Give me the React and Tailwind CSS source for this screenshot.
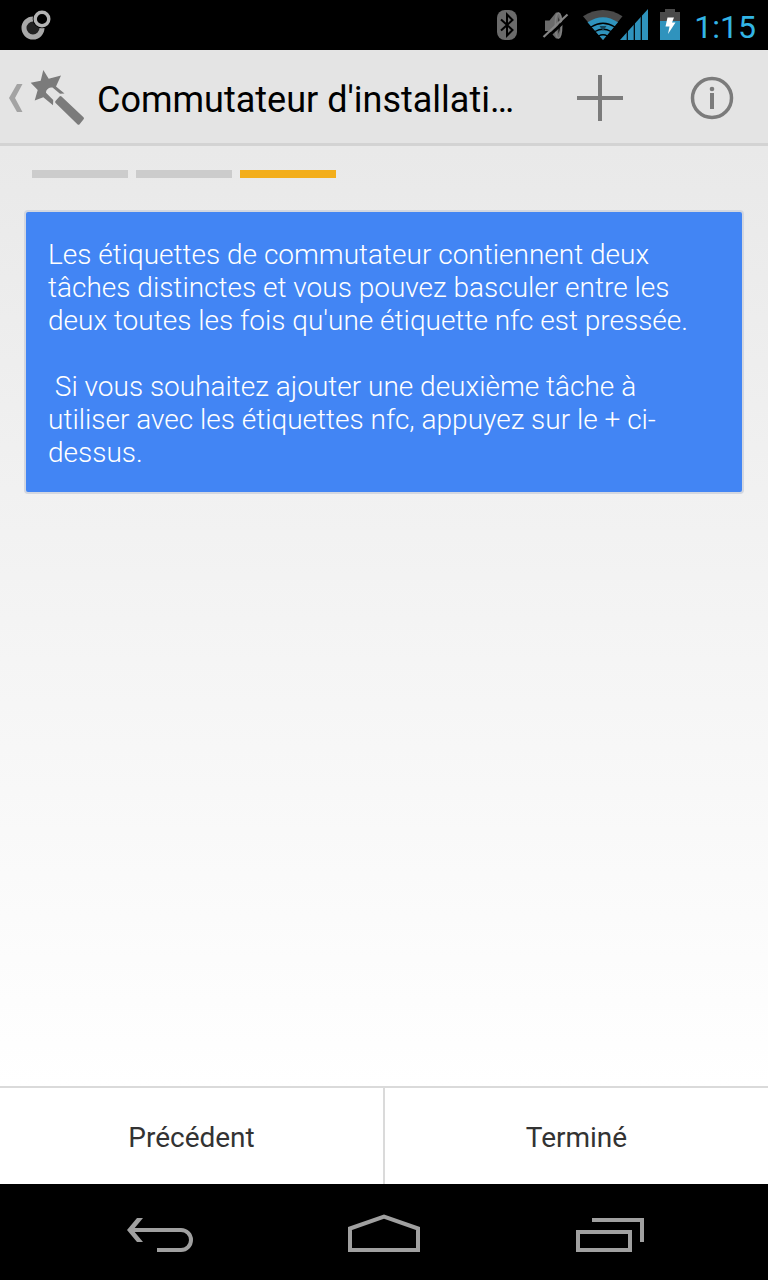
import React from "react";

const STEPS = [
  { id: "type", active: false },
  { id: "first", active: false },
  { id: "second", active: true },
];

const HELP_TEXT =
  "Les étiquettes de commutateur contiennent deux tâches distinctes et vous pouvez basculer entre les deux toutes les fois qu'une étiquette nfc est pressée.\n\n Si vous souhaitez ajouter une deuxième tâche à utiliser avec les étiquettes nfc, appuyez sur le + ci-dessus.";

export default function App() {
  return (
    <div className="flex min-h-screen flex-col bg-black font-[Roboto,sans-serif]">
      <StatusBar />
      <ActionBar title="Commutateur d'installati…" />
      <main className="flex flex-1 flex-col bg-linear-to-b from-[#e9e9e9] to-white px-6 pt-6">
        <StepIndicator />
        <section className="mt-8 rounded-sm border-2 border-[#d3d7e0] bg-[#4285f4] px-[22px] pt-[26px] pb-[23px]">
          <p className="text-[28px] leading-[33px] font-light whitespace-pre-wrap text-white">{HELP_TEXT}</p>
        </section>
      </main>
      <footer className="flex border-t-2 border-[#dadada] bg-white">
        <button type="button" className="h-24 flex-1 border-r-2 border-[#dadada] pt-1 text-[28px] text-[#333333]">
          Précédent
        </button>
        <button type="button" className="h-24 flex-1 pt-1 text-[28px] text-[#333333]">
          Terminé
        </button>
      </footer>
      <NavigationBar />
    </div>
  );
}

function StatusBar() {
  return (
    <div className="flex h-[50px] items-center bg-black pr-3 pl-5">
      <NotificationIcon />
      <div className="ml-auto flex items-center">
        <BluetoothIcon />
        <MutedIcon />
        <WifiIcon />
        <SignalIcon />
        <BatteryIcon />
        <span className="ml-3.5 pt-1 text-[32px] leading-[50px] text-[#33b5e5]">1:15</span>
      </div>
    </div>
  );
}

function ActionBar({ title }) {
  return (
    <header className="flex h-24 items-center border-b-3 border-[#d3d3d3] bg-[#e4e4e4]">
      <button type="button" aria-label="Retour" className="flex shrink-0 items-center pl-2">
        <svg className="h-[60px] w-[80px]" viewBox="0 0 80 60" aria-hidden="true">
          <path d="M9 17h5.500L7 31l7.500 14H9L1 31z" fill="#a3a3a3" />
          <path
            d="M35.300 3l5.400 8.700L53 8.600l-5 11 8.500 7-4.500.1-7.500-6.300c-4 0-6.500 2-6.500 5.300l7.200 7.300-.2 5.300-9.700-8-8.600 3.300 3-10.700L22.700 15.700l10-2z"
            fill="#7b7b7b"
          />
          <path d="M51.500 29.500q1-1 2 0l22 20.700q1 1 .1 2l-4 5q-1 1-2.200 0L47.600 36q-1-1-.1-2z" fill="#7b7b7b" />
        </svg>
      </button>
      <h1 className="ml-[9px] min-w-0 flex-1 truncate pt-1.5 text-[36px] leading-[48px] text-black">{title}</h1>
      <button type="button" aria-label="Ajouter" className="flex h-full w-28 shrink-0 items-center justify-center">
        <svg className="size-12" viewBox="0 0 48 48" aria-hidden="true">
          <path d="M1 25h46M24 2v46" stroke="#7b7b7b" strokeWidth="4" />
        </svg>
      </button>
      <button type="button" aria-label="Informations" className="flex h-full w-28 shrink-0 items-center justify-center">
        <svg className="size-12" viewBox="0 0 48 48" aria-hidden="true">
          <circle cx="24" cy="25" r="19.500" fill="none" stroke="#7b7b7b" strokeWidth="3.500" />
          <circle cx="24" cy="16" r="2.300" fill="#7b7b7b" />
          <path d="M24 20v16" stroke="#7b7b7b" strokeWidth="4" />
        </svg>
      </button>
    </header>
  );
}

function StepIndicator() {
  return (
    <ol className="flex gap-2 px-2">
      {STEPS.map((step) => (
        <li key={step.id} className={step.active ? "h-2 w-24 bg-[#f3ae1b]" : "h-2 w-24 bg-[#cccccc]"} />
      ))}
    </ol>
  );
}

function NavigationBar() {
  return (
    <nav className="flex h-24 items-center justify-between bg-black px-12">
      <button type="button" aria-label="Précédent" className="flex h-full w-56 items-center justify-center">
        <svg className="h-12 w-20" viewBox="0 0 80 48" fill="none" stroke="#a0a0a0" strokeWidth="4" aria-hidden="true">
          <path d="M10 22h51a10 10 0 0 1 0 20H37" />
          <path d="M7 22L17 10h6L13 22l10 12h-6z" fill="#a0a0a0" stroke="none" />
        </svg>
      </button>
      <button type="button" aria-label="Accueil" className="flex h-full w-56 items-center justify-center">
        <svg className="h-12 w-20" viewBox="0 0 80 48" fill="none" stroke="#a0a0a0" strokeWidth="4" aria-hidden="true">
          <path d="M6 42V20.500L40 8.500l34 12V42z" />
        </svg>
      </button>
      <button type="button" aria-label="Applications récentes" className="flex h-full w-56 items-center justify-center">
        <svg className="h-12 w-20" viewBox="0 0 80 48" fill="none" stroke="#a0a0a0" strokeWidth="4" aria-hidden="true">
          <path d="M10 24h52v18H10zM24 12h50v22" />
        </svg>
      </button>
    </nav>
  );
}

function NotificationIcon() {
  return (
    <svg className="h-[50px] w-8" viewBox="0 0 32 50" fill="none" aria-hidden="true">
      <circle cx="13" cy="28" r="7" fill="#222" />
      <circle cx="13" cy="28" r="9" stroke="#a8a8a8" strokeWidth="5" />
      <circle cx="22" cy="19" r="9.300" fill="#000" />
      <circle cx="22" cy="19" r="6.800" stroke="#b4b4b4" strokeWidth="3.400" />
    </svg>
  );
}

function BluetoothIcon() {
  return (
    <svg className="h-[50px] w-6" viewBox="0 0 24 50" aria-hidden="true">
      <rect x="2" y="10" width="20" height="30" rx="8" fill="#6b6b6b" />
      <path d="M6 19.500l11.500 10.500-5.500 5.500v-21l5.500 5.500L6 30.500" fill="none" stroke="#000" strokeWidth="2" />
    </svg>
  );
}

function MutedIcon() {
  return (
    <svg className="ml-5 h-[50px] w-8" viewBox="0 0 32 50" aria-hidden="true">
      <path d="M6 20.500h4.500L17 12.500h3v26h-3L10.500 31H6z" fill="#6b6b6b" />
      <ellipse cx="19.500" cy="25.500" rx="3.200" ry="12.500" fill="#6b6b6b" stroke="#808080" strokeWidth="1.500" />
      <path d="M19.500 17q3 8 0 17z" fill="#000" />
      <path d="M6 39.500L30 17" stroke="#000" strokeWidth="3" />
      <path d="M4.500 37L28.500 14.500" stroke="#858585" strokeWidth="2.200" />
    </svg>
  );
}

function WifiIcon() {
  return (
    <svg className="ml-[9px] h-[50px] w-10 overflow-visible" viewBox="-3 0 40 50" fill="none" aria-hidden="true">
      <path d="M0 16.300Q20 3.500 39.500 16.300L20 40z" fill="#4a4a4a" />
      <path d="M4.500 22.300Q20 12 35 22.300L20 40z" fill="#2f93bd" />
      <path d="M8 27Q20 19.500 32 27M12 31.500Q20 27 28 31.500M15.500 36Q20 33.500 24.500 36" stroke="#000" strokeWidth="1.300" />
      <path d="M16.500 26h7L20 31z" fill="#17465b" />
    </svg>
  );
}

function SignalIcon() {
  return (
    <svg className="h-[50px] w-7" viewBox="0 0 28 50" aria-hidden="true">
      <path d="M0 40L28 9v31z" fill="#2f93bd" />
      <path d="M7.300 10v30M14.300 10v30M21.300 10v30" stroke="#000" strokeWidth="1.200" />
    </svg>
  );
}

function BatteryIcon() {
  return (
    <svg className="ml-3 h-[50px] w-5" viewBox="0 0 20 50" aria-hidden="true">
      <path d="M0 12h5V9h10v3h5v9H0z" fill="#4a4a4a" />
      <path d="M0 21h20v19H0z" fill="#2f93bd" />
      <path d="M7.500 17.500h6.500l-2 5h3.500L8 34l1.500-7.500H5.500z" fill="#fff" />
    </svg>
  );
}
